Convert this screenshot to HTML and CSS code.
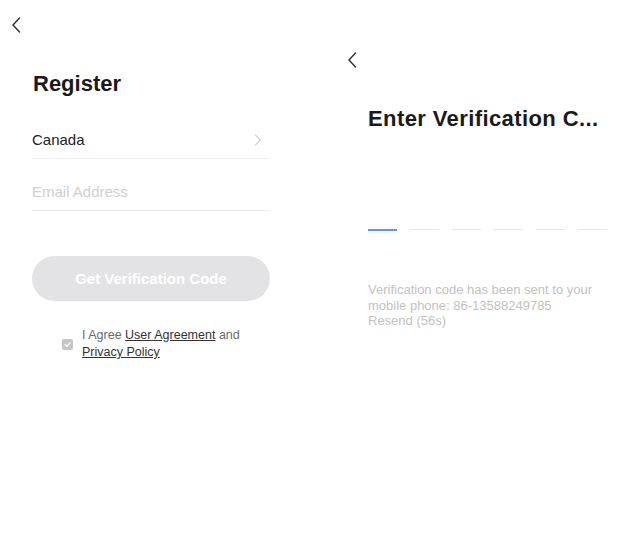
FILE: index.html
```html
<!DOCTYPE html>
<html>
<head>
<meta charset="utf-8">
<link rel="stylesheet" href="styles.css">
</head>
<body>
<div class="screens">
  <section class="panel left">
    <div class="back back-left">
      <svg width="10" height="16" viewBox="0 0 10 16"><path d="M8.5 1 L2 8 L8.5 15" fill="none" stroke="#333" stroke-width="1.5" stroke-linecap="round" stroke-linejoin="round"/></svg>
    </div>
    <h1 class="title">Register</h1>
    <div class="form">
      <div class="row">
        <span class="value">Canada</span>
        <svg class="chev" width="8" height="12" viewBox="0 0 8 12"><path d="M1.5 1 L6.5 6 L1.5 11" fill="none" stroke="#cfcfcf" stroke-width="1.1" stroke-linecap="round" stroke-linejoin="round"/></svg>
      </div>
      <div class="row">
        <span class="placeholder">Email Address</span>
      </div>
    </div>
    <div class="btn">Get Verification Code</div>
    <div class="agree">
      <span class="checkbox">
        <svg width="11" height="11" viewBox="0 0 11 11"><path d="M3 5.8 L4.8 7.4 L8 3.8" fill="none" stroke="#fff" stroke-width="1.2" stroke-linecap="round" stroke-linejoin="round"/></svg>
      </span>
      <p class="agree-text">I Agree <a class="link">User Agreement</a> and<br><a class="link">Privacy Policy</a></p>
    </div>
  </section>
  <section class="panel right">
    <div class="back back-right">
      <svg width="10" height="16" viewBox="0 0 10 16"><path d="M8.5 1 L2 8 L8.5 15" fill="none" stroke="#333" stroke-width="1.5" stroke-linecap="round" stroke-linejoin="round"/></svg>
    </div>
    <h1 class="title title-wide">Enter Verification C...</h1>
    <div class="code">
      <span class="dash active"></span>
      <span class="dash"></span>
      <span class="dash"></span>
      <span class="dash"></span>
      <span class="dash"></span>
      <span class="dash"></span>
    </div>
    <p class="note">Verification code has been sent to your<br>mobile phone: 86-13588249785<br>Resend (56s)</p>
  </section>
</div>
</body>
</html>
```
FILE: styles.css
```css
* { box-sizing: border-box; }
html, body {
  margin: 0;
  padding: 0;
  background: #fff;
}
body {
  font-family: "Liberation Sans", Arial, sans-serif;
  color: #1a1a1a;
  width: 619px;
  height: 550px;
  overflow: hidden;
}
.screens {
  display: flex;
}
.panel {
  display: flex;
  flex-direction: column;
}
.left {
  width: 310px;
  padding: 17px 40px 0 32px;
}
.right {
  width: 309px;
  padding: 52px 0 0 58px;
}
.back {
  height: 15px;
  display: flex;
}
.back svg { display: block; }
.back-left { margin-left: -21px; }
.back-right { margin-left: -21px; }
.title {
  margin: 41px 0 0 1px;
  font-size: 22px;
  line-height: 22px;
  font-weight: bold;
  color: #1a1a1a;
  white-space: nowrap;
}
.title-wide {
  margin-left: 0;
  letter-spacing: 0.4px;
}
.form {
  margin-top: 12px;
}
.row {
  height: 52px;
  display: flex;
  align-items: flex-end;
  justify-content: space-between;
  padding-bottom: 9px;
  border-bottom: 1px solid #ededed;
  font-size: 15px;
  line-height: 18px;
}
.value { color: #222; }
.placeholder { color: #cfcfcf; }
.chev {
  margin: 0 8px 3px 0;
}
.btn {
  margin-top: 45px;
  height: 45px;
  border-radius: 23px;
  background: #e3e3e5;
  color: #fff;
  font-size: 15px;
  font-weight: bold;
  display: flex;
  align-items: center;
  justify-content: center;
}
.agree {
  margin-top: 26px;
  display: flex;
  align-items: center;
  gap: 9px;
  padding-left: 30px;
}
.checkbox {
  width: 11px;
  height: 11px;
  border-radius: 2px;
  background: #c6c6c8;
  display: flex;
  flex-shrink: 0;
}
.agree-text {
  margin: 0;
  font-size: 12.5px;
  line-height: 17px;
  color: #6a6a6a;
}
.link {
  color: #333;
  text-decoration: underline;
}
.code {
  margin-top: 99px;
  display: flex;
  gap: 13px;
}
.dash {
  width: 29px;
  height: 1px;
  background: #e6e6e6;
}
.dash.active {
  height: 2px;
  background: #5a9be0;
}
.note {
  margin: 51px 0 0;
  font-size: 13px;
  line-height: 15.5px;
  color: #c2c2c2;
}
```
